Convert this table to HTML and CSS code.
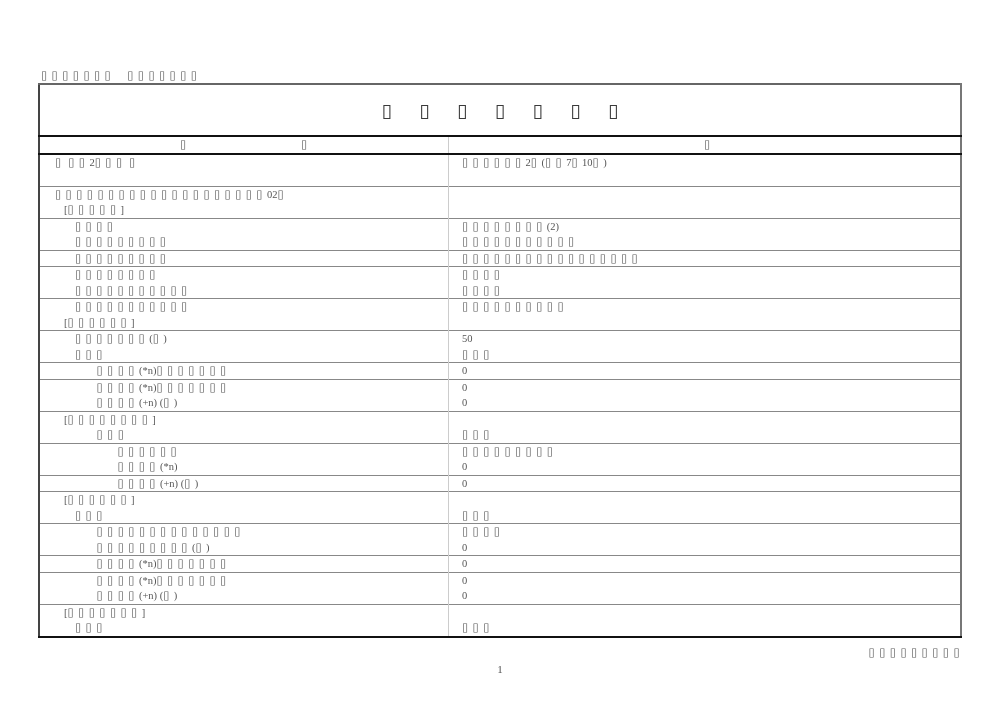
FILE: index.html
```html
<!DOCTYPE html>
<html lang="ja">
<head>
<meta charset="utf-8">
<title>帳票</title>
<link rel="stylesheet" href="styles.css">
</head>
<body>
<div class="page">
  <div class="doc-head"><span class="j">▯▯▯▯▯▯▯</span><span class="sp"></span><span class="j">▯▯▯▯▯▯▯</span></div>
  <table class="sheet">
    <tr class="title-row"><td colspan="2"><span class="title">▯▯▯▯▯▯▯</span></td></tr>
    <tr class="head-row">
      <th class="h-left"><span class="j">▯</span><span class="j h2">▯</span></th>
      <th class="h-right"><span class="j">▯</span></th>
    </tr>
    <tr>
      <td class="c-left"><div><span class="j">▯</span> <span class="j">▯▯</span>2<span class="j">▯▯▯</span> <span class="j">▯</span></div><div>&nbsp;</div></td>
      <td class="c-right"><div><span class="j">▯▯▯▯▯▯</span>2<span class="j">▯</span>(<span class="j">▯▯</span>7<span class="j">▯</span>10<span class="j">▯</span>)</div></td>
    </tr>
    <tr>
      <td class="c-left"><div><span class="j">▯▯▯▯▯▯▯▯▯▯▯▯▯▯▯▯▯▯▯▯</span>02<span class="j">▯</span></div><div class="l1">[<span class="j">▯▯▯▯▯</span>]</div></td>
      <td class="c-right"></td>
    </tr>
    <tr>
      <td class="c-left"><div class="l2"><span class="j">▯▯▯▯</span></div><div class="l2"><span class="j">▯▯▯▯▯▯▯▯▯</span></div></td>
      <td class="c-right"><div><span class="j">▯▯▯▯▯▯▯▯</span>(2)</div><div><span class="j">▯▯▯▯▯▯▯▯▯▯▯</span></div></td>
    </tr>
    <tr>
      <td class="c-left"><div class="l2"><span class="j">▯▯▯▯▯▯▯▯▯</span></div></td>
      <td class="c-right"><div><span class="j">▯▯▯▯▯▯▯▯▯▯▯▯▯▯▯▯▯</span></div></td>
    </tr>
    <tr>
      <td class="c-left"><div class="l2"><span class="j">▯▯▯▯▯▯▯▯</span></div><div class="l2"><span class="j">▯▯▯▯▯▯▯▯▯▯▯</span></div></td>
      <td class="c-right"><div><span class="j">▯▯▯▯</span></div><div><span class="j">▯▯▯▯</span></div></td>
    </tr>
    <tr>
      <td class="c-left"><div class="l2"><span class="j">▯▯▯▯▯▯▯▯▯▯▯</span></div><div class="l1">[<span class="j">▯▯▯▯▯▯</span>]</div></td>
      <td class="c-right"><div><span class="j">▯▯▯▯▯▯▯▯▯▯</span></div></td>
    </tr>
    <tr>
      <td class="c-left"><div class="l2"><span class="j">▯▯▯▯▯▯▯</span>(<span class="j">▯</span>)</div><div class="l2"><span class="j">▯▯▯</span></div></td>
      <td class="c-right"><div>50</div><div><span class="j">▯▯▯</span></div></td>
    </tr>
    <tr>
      <td class="c-left"><div class="l4"><span class="j">▯▯▯▯</span>(*n)<span class="j">▯▯▯▯▯▯▯</span></div></td>
      <td class="c-right"><div>0</div></td>
    </tr>
    <tr>
      <td class="c-left"><div class="l4"><span class="j">▯▯▯▯</span>(*n)<span class="j">▯▯▯▯▯▯▯</span></div><div class="l4"><span class="j">▯▯▯▯</span>(+n) (<span class="j">▯</span>)</div></td>
      <td class="c-right"><div>0</div><div>0</div></td>
    </tr>
    <tr>
      <td class="c-left"><div class="l1">[<span class="j">▯▯▯▯▯▯▯▯</span>]</div><div class="l4"><span class="j">▯▯▯</span></div></td>
      <td class="c-right"><div>&nbsp;</div><div><span class="j">▯▯▯</span></div></td>
    </tr>
    <tr>
      <td class="c-left"><div class="l6"><span class="j">▯▯▯▯▯▯</span></div><div class="l6"><span class="j">▯▯▯▯</span>(*n)</div></td>
      <td class="c-right"><div><span class="j">▯▯▯▯▯▯▯▯▯</span></div><div>0</div></td>
    </tr>
    <tr>
      <td class="c-left"><div class="l6"><span class="j">▯▯▯▯</span>(+n) (<span class="j">▯</span>)</div></td>
      <td class="c-right"><div>0</div></td>
    </tr>
    <tr>
      <td class="c-left"><div class="l1">[<span class="j">▯▯▯▯▯▯</span>]</div><div class="l2"><span class="j">▯▯▯</span></div></td>
      <td class="c-right"><div>&nbsp;</div><div><span class="j">▯▯▯</span></div></td>
    </tr>
    <tr>
      <td class="c-left"><div class="l4"><span class="j">▯▯▯▯▯▯▯▯▯▯▯▯▯▯</span></div><div class="l4"><span class="j">▯▯▯▯▯▯▯▯▯</span>(<span class="j">▯</span>)</div></td>
      <td class="c-right"><div><span class="j">▯▯▯▯</span></div><div>0</div></td>
    </tr>
    <tr>
      <td class="c-left"><div class="l4"><span class="j">▯▯▯▯</span>(*n)<span class="j">▯▯▯▯▯▯▯</span></div></td>
      <td class="c-right"><div>0</div></td>
    </tr>
    <tr>
      <td class="c-left"><div class="l4"><span class="j">▯▯▯▯</span>(*n)<span class="j">▯▯▯▯▯▯▯</span></div><div class="l4"><span class="j">▯▯▯▯</span>(+n) (<span class="j">▯</span>)</div></td>
      <td class="c-right"><div>0</div><div>0</div></td>
    </tr>
    <tr>
      <td class="c-left"><div class="l1">[<span class="j">▯▯▯▯▯▯▯</span>]</div><div class="l2"><span class="j">▯▯▯</span></div></td>
      <td class="c-right"><div>&nbsp;</div><div><span class="j">▯▯▯</span></div></td>
    </tr>
  </table>
  <div class="foot-note"><span class="j">▯▯▯▯▯▯▯▯▯</span></div>
  <div class="page-no">1</div>
</div>
</body>
</html>
```
FILE: styles.css
```css
html, body {
  margin: 0;
  padding: 0;
  background: #fff;
}

body {
  font-family: "Liberation Serif", "DejaVu Serif", serif;
  font-size: 10.5px;
  color: #555;
}

.page {
  padding: 68px 38px 0 38px;
  width: 924px;
  filter: grayscale(1);
}

.j {
  font-family: "DejaVu Sans", sans-serif;
  font-size: 11.5px;
  letter-spacing: 4.27px;
  color: #5a5a5a;
}

.doc-head {
  line-height: 15px;
  padding-left: 3px;
}

.sp {
  display: inline-block;
  width: 12px;
}

.sheet {
  width: 924px;
  border-collapse: collapse;
  border-top: 2px solid #666;
  border-left: 2px solid #444;
  border-right: 2px solid #777;
  border-bottom: 2px solid #111;
  line-height: 15.5px;
}

.sheet td, .sheet th {
  padding: 0;
  vertical-align: top;
  text-align: left;
  font-weight: normal;
}

.sheet tr {
  border-top: 1px solid #888;
}

.title-row td {
  height: 46px;
  padding-top: 4px;
  text-align: center;
  vertical-align: middle;
  border-bottom: 2px solid #111;
}

.title {
  font-family: "DejaVu Sans", sans-serif;
  font-size: 19px;
  letter-spacing: 27.3px;
  margin-right: -27.3px;
  color: #3a3a3a;
}

.head-row {
  border-bottom: 2px solid #111;
}

.head-row th {
  height: 15px;
}

.h-left {
  width: 265px;
  padding-left: 140px !important;
  border-right: 1px solid #ccc;
}

.h2 {
  margin-left: 110.4px;
}

.h-right {
  padding-left: 255px !important;
}

.c-left {
  width: 393px;
  padding-left: 15px !important;
  border-right: 1px solid #ccc;
}

.c-right {
  padding-left: 13px !important;
}

.l1 { padding-left: 9px; }
.l2 { padding-left: 20px; }
.l4 { padding-left: 41.5px; }
.l6 { padding-left: 62.5px; }

.foot-note {
  text-align: right;
  margin-right: -2px;
  margin-top: 7px;
  line-height: 15px;
}

.page-no {
  text-align: center;
  margin-top: 2px;
  line-height: 15px;
  font-size: 11px;
}
```
